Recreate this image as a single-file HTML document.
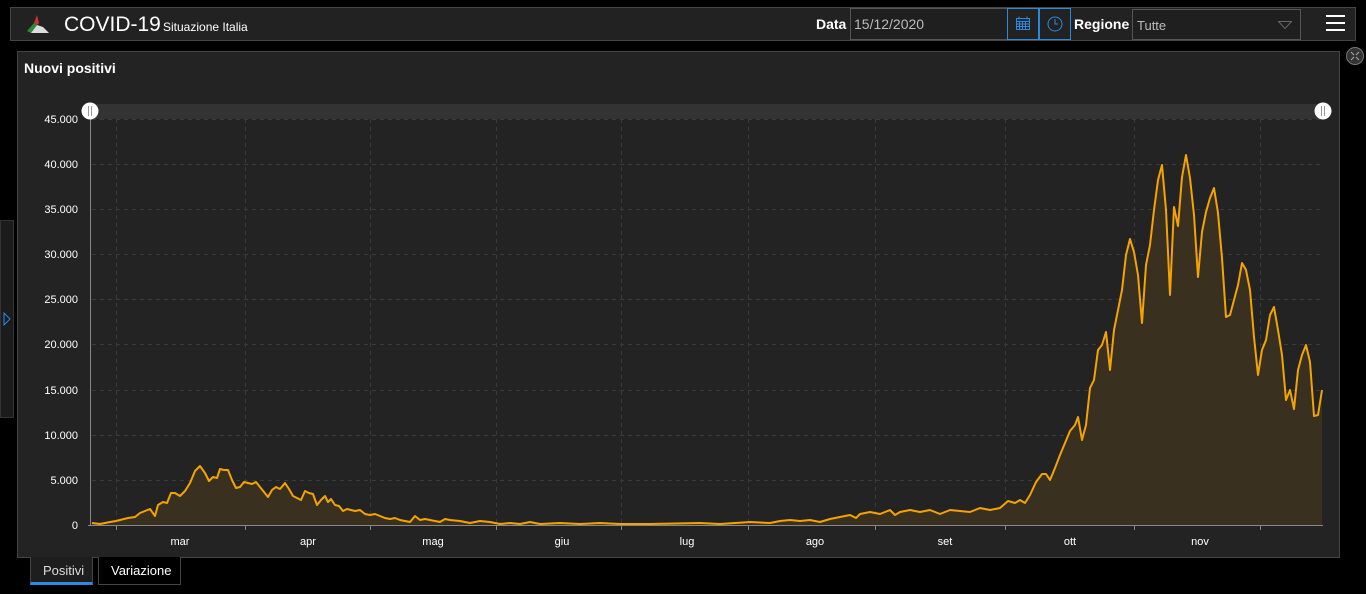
<!DOCTYPE html>
<html><head><meta charset="utf-8"><style>
*{margin:0;padding:0;box-sizing:border-box}
body{width:1366px;height:594px;background:#000;font-family:"Liberation Sans",sans-serif;color:#fff;position:relative;overflow:hidden}
.hdr{position:absolute;left:10px;top:7px;width:1346px;height:34px;background:#222;border:1px solid #444}
.abs{position:absolute}
.panel{position:absolute;left:17px;top:51px;width:1323px;height:507px;background:#232323;border:1px solid #444}
.inp{position:absolute;border:1px solid #555;background:#1f1f1f;color:#bbb;font-size:14px}
.tab{position:absolute;top:557px;height:28px;font-size:13px;border:1px solid #444;border-top:none;padding:6px 12px}
</style></head><body>
<div class="hdr">
  <svg class="abs" style="left:14px;top:5px" width="26" height="22" viewBox="0 0 26 22">
    <path d="M12 2 L9 10 L12 12 L14 10 Z" fill="#c33"/>
    <path d="M9 10 L2 18 L6 20 L12 12 Z" fill="#2a8a3a"/>
    <path d="M12 12 L6 20 L24 20 L18 14 Z" fill="#ddd"/>
  </svg>
  <div class="abs" style="left:53px;top:5px;font-size:21px;color:#fff">COVID-19</div>
  <div class="abs" style="left:152px;top:12px;font-size:12px;color:#fff">Situazione Italia</div>
  <div class="abs" style="left:805px;top:8px;font-size:14px;font-weight:bold">Data</div>
  <div class="inp" style="left:839px;top:0px;width:158px;height:32px;padding:7px 3px">15/12/2020</div>
  <div class="abs" style="left:996px;top:0px;width:32px;height:32px;border:1px solid #2a8ae0"><svg width="30" height="30" viewBox="0 0 30 30"><g fill="none" stroke="#2a8ae0" stroke-width="1"><rect x="8.5" y="9.5" width="13" height="11"/><path d="M8.5 12.5h13M8.5 15h13M8.5 17.5h13M11.5 12.5v8M14.5 12.5v8M17.5 12.5v8M11 7.5v3M19 7.5v3"/></g></svg></div>
  <div class="abs" style="left:1028px;top:0px;width:32px;height:32px;border:1px solid #2a8ae0"><svg width="30" height="30" viewBox="0 0 30 30"><circle cx="15" cy="15" r="7" fill="none" stroke="#2a8ae0"/><path d="M15 10v5h3" fill="none" stroke="#2a8ae0"/></svg></div>
  <div class="abs" style="left:1063px;top:8px;font-size:14px;font-weight:bold">Regione</div>
  <div class="inp" style="left:1121px;top:1px;width:169px;height:31px;padding:8px 4px;font-size:13px">Tutte<svg class="abs" style="right:8px;top:11px" width="14" height="8"><path d="M0.5 0.5 L13.5 0.5 L7 7.5 Z" fill="none" stroke="#666"/></svg></div>
  <div class="abs" style="left:1315px;top:7px;width:19px;height:2px;background:#fff;box-shadow:0 7px #fff,0 14px #fff"></div>
</div>
<div class="abs" style="left:0;top:220px;width:14px;height:198px;background:#1c1c1c;border:1px solid #333"><svg class="abs" style="left:2px;top:91px" width="8" height="14"><path d="M1 1 L7 7 L1 13 Z" fill="none" stroke="#2a8ae0"/></svg></div>
<svg class="abs" style="left:1345px;top:46px" width="20" height="20"><circle cx="10" cy="10" r="8.5" fill="#333" stroke="#777"/><path d="M6 6l3 3M14 6l-3 3M6 14l3-3M14 14l-3-3" stroke="#aaa"/></svg>
<div class="panel">
  <div class="abs" style="left:6px;top:8px;font-size:14px;font-weight:bold">Nuovi positivi</div>
</div>
<svg class="abs" style="left:0;top:0" width="1366" height="594">
  <rect x="92" y="104" width="1231" height="15" fill="#333"/>
  <g stroke="#3a3a3a" stroke-dasharray="4,4">
    <path d="M92 119.5H1323M92 164.5H1323M92 209.5H1323M92 254.5H1323M92 299.5H1323M92 344.5H1323M92 390.5H1323M92 435.5H1323M92 480.5H1323"/>
    <path d="M116.5 119V525M245.5 119V525M370.5 119V525M496.5 119V525M621.5 119V525M748.5 119V525M875.5 119V525M1005.5 119V525M1134.5 119V525M1260.5 119V525"/>
  </g>
  <g stroke="#888"><path d="M88 525.5H1323M116.5 525v5M245.5 525v5M370.5 525v5M496.5 525v5M621.5 525v5M748.5 525v5M875.5 525v5M1005.5 525v5M1134.5 525v5M1260.5 525v5M90.5 119v406"/></g>
  <g font-size="11" fill="#fff" text-anchor="end">
    <text x="78" y="123">45.000</text><text x="78" y="168">40.000</text><text x="78" y="213">35.000</text><text x="78" y="258">30.000</text><text x="78" y="303">25.000</text><text x="78" y="348">20.000</text><text x="78" y="394">15.000</text><text x="78" y="439">10.000</text><text x="78" y="484">5.000</text><text x="78" y="529">0</text>
  </g>
  <g font-size="11" fill="#fff" text-anchor="middle">
    <text x="180" y="545">mar</text><text x="308" y="545">apr</text><text x="433" y="545">mag</text><text x="562" y="545">giu</text><text x="687" y="545">lug</text><text x="815" y="545">ago</text><text x="945" y="545">set</text><text x="1070" y="545">ott</text><text x="1200" y="545">nov</text>
  </g>
  <polyline fill="#3a3020" stroke="none" points="92,525 92,523 100,524 110,522 116,521 120,520 128,518 135,517 140,513 145,511 150,509 155,516 158,505 163,502 167,503 171,493 175,493 180,496 185,491 190,483 195,471 200,466 205,473 209,481 213,477 217,478 220,469 224,470 228,470 232,480 236,488 240,487 244,482 248,483 252,484 256,482 260,487 264,492 268,497 272,490 276,487 280,489 285,483 289,489 293,496 297,498 301,500 305,491 309,493 313,494 317,505 321,500 325,496 328,502 331,499 335,505 339,506 343,511 347,509 351,510 355,511 360,510 365,514 370,515 375,514 380,516 385,518 390,519 395,518 400,520 405,521 410,522 415,516 420,520 425,519 430,520 435,521 440,522 445,519 450,520 460,521 470,523 480,521 490,522 500,524 510,523 520,524 530,522 540,524 560,523 580,524 600,523 620,524 650,524 700,523 720,524 750,522 770,523 780,521 790,520 800,521 810,520 820,522 830,519 840,517 850,515 856,518 860,514 870,512 880,514 885,512 890,510 895,515 900,512 910,510 920,512 930,510 940,514 950,510 960,511 970,512 980,508 990,510 1000,508 1008,501 1015,503 1020,500 1025,503 1030,495 1036,482 1042,474 1046,474 1050,480 1055,468 1060,455 1065,443 1070,431 1075,425 1078,417 1082,440 1086,425 1090,388 1094,380 1098,350 1102,345 1106,332 1110,370 1114,330 1118,310 1122,290 1126,255 1130,239 1134,252 1138,275 1142,323 1146,265 1150,245 1154,210 1158,180 1162,165 1166,210 1170,295 1174,207 1178,226 1182,177 1186,155 1190,178 1194,215 1198,277 1202,232 1206,212 1210,198 1214,188 1218,213 1222,258 1226,317 1230,315 1234,300 1238,285 1242,263 1246,270 1250,290 1254,337 1258,375 1262,350 1266,340 1270,315 1274,307 1278,330 1282,355 1286,400 1290,390 1294,409 1298,370 1302,355 1306,345 1310,362 1314,416 1318,415 1322,390 1322,525"/>
  <polyline fill="none" stroke="#f5a300" stroke-width="2" stroke-linejoin="round" points="92,523 100,524 110,522 116,521 120,520 128,518 135,517 140,513 145,511 150,509 155,516 158,505 163,502 167,503 171,493 175,493 180,496 185,491 190,483 195,471 200,466 205,473 209,481 213,477 217,478 220,469 224,470 228,470 232,480 236,488 240,487 244,482 248,483 252,484 256,482 260,487 264,492 268,497 272,490 276,487 280,489 285,483 289,489 293,496 297,498 301,500 305,491 309,493 313,494 317,505 321,500 325,496 328,502 331,499 335,505 339,506 343,511 347,509 351,510 355,511 360,510 365,514 370,515 375,514 380,516 385,518 390,519 395,518 400,520 405,521 410,522 415,516 420,520 425,519 430,520 435,521 440,522 445,519 450,520 460,521 470,523 480,521 490,522 500,524 510,523 520,524 530,522 540,524 560,523 580,524 600,523 620,524 650,524 700,523 720,524 750,522 770,523 780,521 790,520 800,521 810,520 820,522 830,519 840,517 850,515 856,518 860,514 870,512 880,514 885,512 890,510 895,515 900,512 910,510 920,512 930,510 940,514 950,510 960,511 970,512 980,508 990,510 1000,508 1008,501 1015,503 1020,500 1025,503 1030,495 1036,482 1042,474 1046,474 1050,480 1055,468 1060,455 1065,443 1070,431 1075,425 1078,417 1082,440 1086,425 1090,388 1094,380 1098,350 1102,345 1106,332 1110,370 1114,330 1118,310 1122,290 1126,255 1130,239 1134,252 1138,275 1142,323 1146,265 1150,245 1154,210 1158,180 1162,165 1166,210 1170,295 1174,207 1178,226 1182,177 1186,155 1190,178 1194,215 1198,277 1202,232 1206,212 1210,198 1214,188 1218,213 1222,258 1226,317 1230,315 1234,300 1238,285 1242,263 1246,270 1250,290 1254,337 1258,375 1262,350 1266,340 1270,315 1274,307 1278,330 1282,355 1286,400 1290,390 1294,409 1298,370 1302,355 1306,345 1310,362 1314,416 1318,415 1322,390"/>
  <circle cx="90" cy="111" r="8.5" fill="#fff"/><path d="M88.5 106v10M91.5 106v10" stroke="#999"/>
  <circle cx="1323" cy="111" r="8.5" fill="#fff"/><path d="M1321.5 106v10M1324.5 106v10" stroke="#999"/>
</svg>
<div class="tab" style="left:30px;width:63px;background:#1e1e1e;border-bottom:3px solid #2a8ae0;color:#ddd">Positivi</div>
<div class="tab" style="left:98px;width:83px;background:#000;border-bottom:1px solid #444">Variazione</div>
</body></html>
